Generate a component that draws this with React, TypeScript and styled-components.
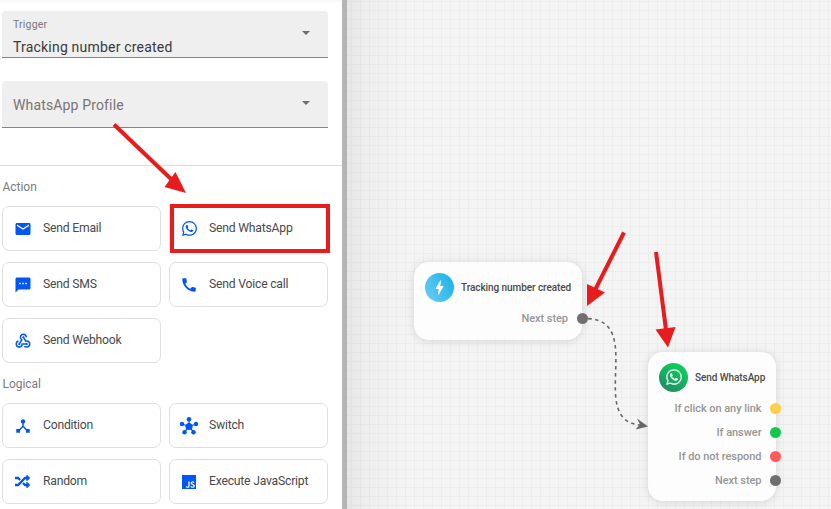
import React from "react";
import styled, { createGlobalStyle } from "styled-components";
import { MdEmail, MdSms, MdCall, MdWebhook, MdDeviceHub, MdBolt } from "react-icons/md";
import { FaRandom, FaWhatsapp } from "react-icons/fa";
import { BsWhatsapp } from "react-icons/bs";
import { SiJavascript } from "react-icons/si";

const GlobalStyle = createGlobalStyle`
  * { box-sizing: border-box; }
  body {
    margin: 0;
    font-family: Roboto, "Liberation Sans", sans-serif;
    overflow: hidden;
  }
`;

const Page = styled.div`
  position: relative;
  display: flex;
  width: 831px;
  height: 509px;
  overflow: hidden;
  background: #fff;
`;

const Sidebar = styled.aside`
  width: 342px;
  height: 100%;
  flex: none;
  background: linear-gradient(#f7f7f7, #fff 3px);
`;

const Fields = styled.div`
  display: flex;
  flex-direction: column;
  gap: 23px;
  height: 166px;
  padding: 11px 14px 0 2px;
  border-bottom: 1px solid #dcdcdc;
`;

const SelectField = styled.div`
  display: flex;
  align-items: center;
  justify-content: space-between;
  height: 47px;
  padding: 0 18px 0 11px;
  border-radius: 4px 4px 0 0;
  border-bottom: 1px solid #868686;
  background: #efefef;
`;

const FieldText = styled.div`
  display: flex;
  flex-direction: column;
`;

const FieldLabel = styled.span`
  font-size: 10.5px;
  line-height: 14px;
  letter-spacing: 0.2px;
  color: #777;
  margin-top: 6px;
`;

const FieldValue = styled.span<{ $muted?: boolean }>`
  font-size: 14px;
  line-height: 18px;
  margin-top: ${(p) => (p.$muted ? 2 : 6)}px;
  letter-spacing: ${(p) => (p.$muted ? 0.15 : 0.2)}px;
  color: ${(p) => (p.$muted ? "#757575" : "#3a3a3a")};
`;

const Caret = styled.span`
  width: 0;
  height: 0;
  margin-top: -3px;
  border: 4.5px solid transparent;
  border-top: 4.5px solid #6c6c6c;
  border-bottom: 0;
`;

const Section = styled.section`
  padding: 13px 14px 0 2px;
`;

const SectionTitle = styled.h2`
  margin: 0 0 11px 0.6px;
  font-size: 12px;
  line-height: 16px;
  font-weight: 400;
  letter-spacing: -0.05px;
  color: #7b7b7b;
`;

const CardGrid = styled.div`
  display: grid;
  grid-template-columns: 159px 159px;
  grid-auto-rows: 45px;
  gap: 11px 8px;
`;

const Card = styled.div`
  display: flex;
  align-items: center;
  border: 1px solid #dfdfdf;
  border-radius: 7px;
  background: #fff;

  &:nth-child(even) {
    padding-left: 0;
  }

  &:nth-child(even) > :first-child {
    width: 38px;
  }
`;

const CardIcon = styled.span`
  display: flex;
  align-items: center;
  justify-content: center;
  width: 39px;
  height: 20px;
  color: #0057f5;
`;

const CardLabel = styled.span`
  margin: -2px 0 0 1px;
  font-size: 12.2px;
  line-height: 16px;
  letter-spacing: -0.22px;
  color: #4a4a4a;
  white-space: nowrap;
`;

const Divider = styled.div`
  width: 5px;
  flex: none;
  background: #b5b5b5;
`;

const Canvas = styled.main`
  position: relative;
  flex: 1;
  background-color: #f4f4f4;
  background-image:
    linear-gradient(90deg, rgba(0, 0, 0, 0.055), rgba(0, 0, 0, 0.025) 20px, transparent 60px),
    linear-gradient(90deg, #ededed 1px, transparent 1px),
    linear-gradient(#ededed 1px, transparent 1px);
  background-size: auto, 9px 9px, 9px 9px;
  background-position: 0 0, 4px 0, 0 1px;
`;

const Node = styled.div<{ $x: number; $y: number; $w: number; $h: number }>`
  position: absolute;
  left: ${(p) => p.$x}px;
  top: ${(p) => p.$y}px;
  width: ${(p) => p.$w}px;
  height: ${(p) => p.$h}px;
  padding-top: 10px;
  border-radius: 15px;
  background: rgba(255, 255, 255, 0.8);
  box-shadow: 0 1px 10px rgba(0, 0, 0, 0.13);
`;

const NodeHeader = styled.div`
  display: flex;
  align-items: center;
  gap: 7px;
  height: 30px;
  padding-left: 11px;
  margin-bottom: 4px;
`;

const NodeBadge = styled.span<{ $bg: string }>`
  display: flex;
  align-items: center;
  justify-content: center;
  flex: none;
  width: 29px;
  height: 29px;
  border-radius: 50%;
  color: #fff;
  background: ${(p) => p.$bg};
`;

const NodeTitle = styled.span`
  font-size: 10px;
  font-weight: 500;
  letter-spacing: -0.07px;
  color: #4a4a4a;
  white-space: nowrap;
`;

const PortRow = styled.div<{ $overhang: number }>`
  display: flex;
  align-items: center;
  justify-content: flex-end;
  gap: 8.5px;
  height: 24px;
  margin-right: -${(p) => p.$overhang}px;
`;

const PortLabel = styled.span`
  font-size: 11px;
  font-weight: 500;
  letter-spacing: -0.05px;
  color: #969696;
  white-space: nowrap;
`;

const Port = styled.span<{ $color: string }>`
  width: 11px;
  height: 11px;
  border-radius: 50%;
  background: ${(p) => p.$color};
`;

const Overlay = styled.svg`
  position: absolute;
  inset: 0;
  pointer-events: none;
`;

const Highlight = styled.div`
  position: absolute;
  left: 170px;
  top: 204px;
  width: 160px;
  height: 49px;
  border: 4px solid #e81c1c;
`;

const HubIcon = () => (
  <svg width="20" height="20" viewBox="0 0 20 20" fill="currentColor">
    <path
      d="M10 10.5V3.5M10 10.5L3 8M10 10.5L17 8M10 10.5L5.5 16M10 10.5L14.5 16"
      stroke="currentColor"
      strokeWidth="1.3"
    />
    <circle cx="10" cy="10.5" r="3.6" />
    <circle cx="10" cy="3.3" r="2.3" />
    <circle cx="3" cy="8" r="2.2" />
    <circle cx="17" cy="8" r="2.2" />
    <circle cx="5.5" cy="16.3" r="2.2" />
    <circle cx="14.5" cy="16.3" r="2.2" />
  </svg>
);

type Item = { label: string; icon: React.ReactNode };

const actions: Item[] = [
  { label: "Send Email", icon: <MdEmail size={18} /> },
  { label: "Send WhatsApp", icon: <BsWhatsapp size={15} /> },
  { label: "Send SMS", icon: <MdSms size={18} /> },
  { label: "Send Voice call", icon: <MdCall size={18} /> },
  { label: "Send Webhook", icon: <MdWebhook size={18} /> },
];

const logical: Item[] = [
  { label: "Condition", icon: <MdDeviceHub size={18} /> },
  { label: "Switch", icon: <HubIcon /> },
  { label: "Random", icon: <FaRandom size={15} /> },
  { label: "Execute JavaScript", icon: <SiJavascript size={14} /> },
];

const Palette = ({ title, items }: { title: string; items: Item[] }) => (
  <Section>
    <SectionTitle>{title}</SectionTitle>
    <CardGrid>
      {items.map((item) => (
        <Card key={item.label}>
          <CardIcon>{item.icon}</CardIcon>
          <CardLabel>{item.label}</CardLabel>
        </Card>
      ))}
    </CardGrid>
  </Section>
);

type PortLineProps = { label: string; color: string; overhang?: number };

const PortLine = ({ label, color, overhang = 5 }: PortLineProps) => (
  <PortRow $overhang={overhang}>
    <PortLabel>{label}</PortLabel>
    <Port $color={color} />
  </PortRow>
);

export default function App() {
  return (
    <>
      <GlobalStyle />
      <Page>
        <Sidebar>
          <Fields>
            <SelectField>
              <FieldText>
                <FieldLabel>Trigger</FieldLabel>
                <FieldValue>Tracking number created</FieldValue>
              </FieldText>
              <Caret />
            </SelectField>
            <SelectField>
              <FieldText>
                <FieldValue $muted>WhatsApp Profile</FieldValue>
              </FieldText>
              <Caret />
            </SelectField>
          </Fields>
          <Palette title="Action" items={actions} />
          <Palette title="Logical" items={logical} />
        </Sidebar>
        <Divider />
        <Canvas>
          <Node $x={67} $y={262} $w={168} $h={78}>
            <NodeHeader>
              <NodeBadge $bg="linear-gradient(60deg, #6ccdf2, #17b0ea)">
                <MdBolt size={19} />
              </NodeBadge>
              <NodeTitle>Tracking number created</NodeTitle>
            </NodeHeader>
            <PortLine label="Next step" color="#6f6f6f" overhang={5.5} />
          </Node>
          <Node $x={301} $y={352} $w={128} $h={149}>
            <NodeHeader>
              <NodeBadge $bg="linear-gradient(30deg, #26806a, #10c35c 70%, #0bd65c)">
                <FaWhatsapp size={18} />
              </NodeBadge>
              <NodeTitle>Send WhatsApp</NodeTitle>
            </NodeHeader>
            <PortLine label="If click on any link" color="#ffcf4a" />
            <PortLine label="If answer" color="#16c653" />
            <PortLine label="If do not respond" color="#ff5a5a" />
            <PortLine label="Next step" color="#6f6f6f" />
          </Node>
        </Canvas>
        <Overlay width="831" height="509" viewBox="0 0 831 509">
          <path
            d="M588 318.6C646 321 586 422 641 425"
            fill="none"
            stroke="#666"
            strokeWidth="1.6"
            strokeDasharray="3.5 3.5"
          />
          <path d="M648 426.5L637 418.5L640 424.5L635.5 429.5Z" fill="#666" />
          <g stroke="#e81c1c" strokeWidth="4" fill="#e81c1c">
            <path d="M114 124.5L171 179" />
            <path d="M624 232.5L595 290" />
            <path d="M656 252L666 330" />
            <g stroke="none">
              <path d="M186 193L164.5 187L175.5 172Z" />
              <path d="M587 306L587 284L605 292.5Z" />
              <path d="M668 347.5L655.5 329.5L675.5 327Z" />
            </g>
          </g>
        </Overlay>
        <Highlight />
      </Page>
    </>
  );
}
